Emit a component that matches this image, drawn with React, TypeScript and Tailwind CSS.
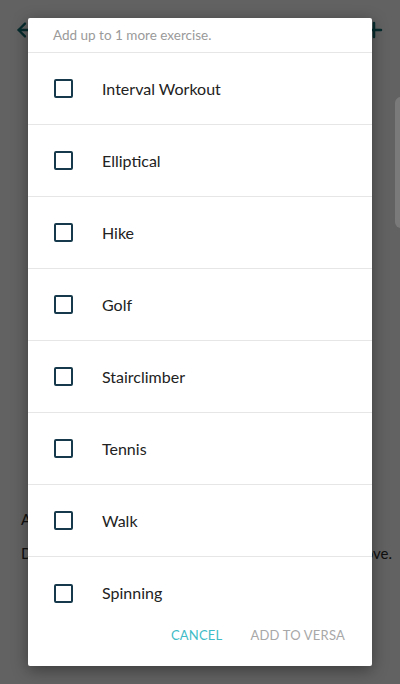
import { ArrowLeft, Plus } from 'lucide-react'

const exercises = [
  'Interval Workout',
  'Elliptical',
  'Hike',
  'Golf',
  'Stairclimber',
  'Tennis',
  'Walk',
  'Spinning',
]

function ExerciseRow({ label, last }: { label: string; last?: boolean }) {
  return (
    <div
      className={`flex h-[72px] shrink-0 items-center pl-[26px] ${last ? '' : 'border-b border-[#e6e6e6]'}`}
    >
      <span className="h-[19px] w-[19px] rounded-[2px] border-2 border-[#163a4b]" />
      <span className="ml-[29px] text-[16px] text-[#222]">{label}</span>
    </div>
  )
}

export default function App() {
  return (
    <div
      className="relative h-[684px] w-[400px] overflow-hidden bg-[#cccccc]"
      style={{ fontFamily: 'Lato, "Open Sans", sans-serif' }}
    >
      {/* page behind the dialog */}
      <div className="flex h-[60px] items-center justify-between px-[14px]">
        <ArrowLeft size={22} strokeWidth={2.5} className="text-[#0d5a5e]" />
        <Plus size={24} strokeWidth={2.5} className="text-[#0d5a5e]" />
      </div>
      <div className="mt-[37px] ml-[395px] h-[131px] w-[20px] rounded-[6px] bg-white" />
      <div className="mt-[280px] pl-[21px] text-[15px] text-[#222]">
        <p>About</p>
        <p className="mt-[11px] w-[371px] whitespace-nowrap [text-align-last:justify]">
          Drag to reorder the shortcuts as shown above.
        </p>
      </div>

      <div className="absolute inset-0 bg-black/52" />

      <div className="absolute left-[28px] top-[18px] flex h-[648px] w-[344px] flex-col rounded-[2px] bg-white shadow-[0_4px_16px_rgba(0,0,0,0.4)]">
        <div className="flex h-[35px] shrink-0 items-center border-b border-[#e6e6e6] pl-[25px] text-[13.5px] text-[#9a9a9a]">
          Add up to 1 more exercise.
        </div>
        <div className="flex h-[557px] shrink-0 flex-col overflow-hidden">
          {exercises.map((e, i) => (
            <ExerciseRow key={e} label={e} last={i === exercises.length - 1} />
          ))}
        </div>
        <div className="flex justify-end gap-[28px] pr-[27px] pt-[16px] text-[13px] tracking-[0.2px]">
          <span className="text-[#3fbcc7]">CANCEL</span>
          <span className="text-[#a8a8a8]">ADD TO VERSA</span>
        </div>
      </div>
    </div>
  )
}
